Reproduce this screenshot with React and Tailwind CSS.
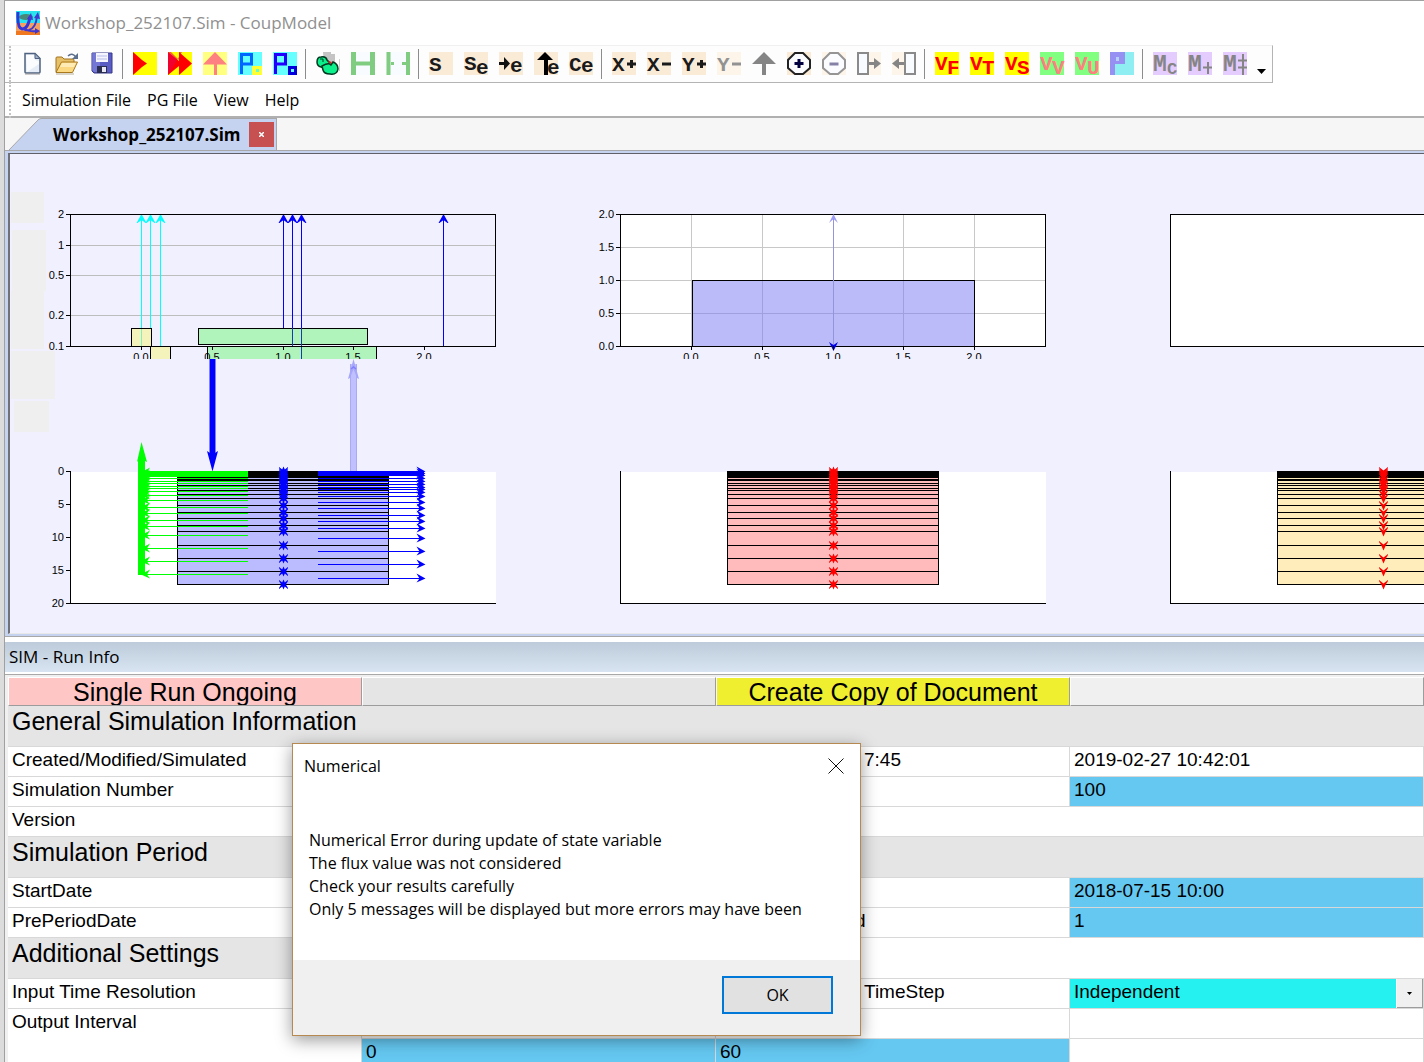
import React from 'react';

const UI_FONT = "font-['Open_Sans',sans-serif]";
const GRID_FONT = "font-['Liberation_Sans',Arial,sans-serif]";

/* ---------- toolbar icons (24 x 23 each) ---------- */

function Glyph({ x = 0, y = 18, size = 21, fill = '#1a1a1a', children }) {
  return (
    <text x={x} y={y} fontSize={size} fill={fill} fontWeight="bold" fontFamily="Liberation Mono, Courier New, monospace">
      {children}
    </text>
  );
}

function Tile({ fill }) {
  return <rect width="24" height="23" fill={fill} shapeRendering="crispEdges" />;
}

const PEACH = '#faebd7';
const PEACH_LIGHT = '#fdf4ea';

const fileTools = [
  {
    label: 'New',
    art: (
      <>
        <path d="M5 1.500h10l5 5V20q0 1-1 1H6q-1 0-1-1z" fill="#e6edf6" stroke="#4f6280" strokeWidth="1.500" />
        <path d="M6 3h8l1 5 4 1v3L7 20z" fill="#fff" opacity="0.8" />
        <path d="M15 1.500V6.500h5z" fill="#9fb0c8" stroke="#4f6280" />
        <path d="M5 22h15" stroke="#9a9a9a" />
      </>
    ),
  },
  {
    label: 'Open',
    art: (
      <>
        <path d="M1 20V6q0-1 1-1h5l2 2h9q1 0 1 1v4" fill="#e7c169" stroke="#a07320" />
        <path d="M1 20.500L6.500 10H22.500L17.500 20.500z" fill="#fbd983" stroke="#a8781f" />
        <path d="M7 11h14l-2 4H5z" fill="#ffecb4" />
        <path d="M13 4q4-4 8 1" fill="none" stroke="#5c6f8c" strokeWidth="1.500" />
        <path d="M23 1v6h-6z" fill="#5c6f8c" />
        <path d="M1 22h18" stroke="#8a7a55" opacity="0.6" />
      </>
    ),
  },
  {
    label: 'Save',
    art: (
      <>
        <path d="M2 1h20v20H4l-2-2z" fill="#5a5cc4" stroke="#36388c" />
        <path d="M2 1h8v19H4l-2-2z" fill="#8688e0" opacity="0.6" />
        <rect x="6" y="1" width="12" height="9" fill="#f4f5ff" />
        <path d="M7 4h10M7 7h10" stroke="#b9bce8" />
        <rect x="7" y="14" width="10" height="7" fill="#2c2e50" />
        <rect x="12" y="15" width="4" height="5" fill="#e8e8f4" />
      </>
    ),
  },
];

const runTools = [
  {
    label: 'Run',
    art: (
      <>
        <Tile fill="#ffff00" />
        <path d="M0 0L9 8l5 3.500L9 15 0 23z" fill="#ff0000" />
      </>
    ),
  },
  {
    label: 'Run all',
    art: (
      <>
        <Tile fill="#ffff00" />
        <path d="M0 0L11 9V0L24 11.500 11 23V14L0 23z" fill="#ff0000" />
        <path d="M0 0h3l8 8V0h3L0 23z" fill="#e8004c" opacity="0.600" />
      </>
    ),
  },
  {
    label: 'Upload result',
    art: (
      <>
        <Tile fill="#ffff80" />
        <path d="M12 0L24 12.500H14V23H11V12.500H0z" fill="#ff8080" />
      </>
    ),
  },
  {
    label: 'Parameters',
    art: (
      <>
        <Tile fill="#66ffff" />
        <path d="M3.500 22V2.500H13.500V12H3.500" fill="none" stroke="#0066ff" strokeWidth="3" />
        <rect x="14" y="14" width="10" height="9" fill="#ffff33" />
        <rect x="18" y="17" width="3" height="3" fill="#66ffcc" />
      </>
    ),
  },
  {
    label: 'Parameter list',
    art: (
      <>
        <Tile fill="#66ffff" />
        <path d="M2.500 22V2.500H12.500V12H2.500" fill="none" stroke="#2200ff" strokeWidth="3" />
        <rect x="16.500" y="15.500" width="6" height="6" fill="#66ffff" stroke="#0000dd" strokeWidth="3" />
      </>
    ),
  },
];

const linkTools = [
  {
    label: 'Duck',
    art: (
      <>
        <path d="M7 0h8v2h4v10H8z" fill="#c4c4c4" />
        <path d="M1 10Q1 5 5 5q5-1 6 3l3 3-3 2q-2 3-6 2-4-1-4-5z" fill="#0cf08c" stroke="#003820" strokeWidth="1.500" />
        <path d="M6 14q7-4 9-1l2-3q5 2 5 7-1 6-8 5-6 0-7-4z" fill="#0cf08c" stroke="#003820" strokeWidth="1.500" />
        <path d="M12 9l4 1-2 2z" fill="#e02020" />
        <path d="M4 7h3v3" fill="none" stroke="#003820" />
        <path d="M23.500 7v12" stroke="#d0d0d0" />
      </>
    ),
  },
  {
    label: 'Join columns',
    art: (
      <>
        <Tile fill="#f8fbff" />
        <path d="M2.500 0V23M21.500 0V23" stroke="#80cc80" strokeWidth="5" />
        <path d="M5 11.500H19" stroke="#80cc80" strokeWidth="4" />
      </>
    ),
  },
  {
    label: 'Split columns',
    art: (
      <>
        <Tile fill="#f8fbff" />
        <path d="M2.500 0V23M22 0V23" stroke="#80cc80" strokeWidth="4" />
        <path d="M5 11.500H8M16 11.500H20" stroke="#80cc80" strokeWidth="3" />
      </>
    ),
  },
];

const seriesTools = [
  { label: 'Series', art: <><Tile fill={PEACH} /><Glyph y={19}>S</Glyph></> },
  { label: 'Series e', art: <><Tile fill={PEACH} /><Glyph>S</Glyph><Glyph x={12} y={22}>e</Glyph></> },
  {
    label: 'Next e',
    art: <><Tile fill={PEACH} /><path d="M0 10h5V5l6 6.500-6 6.500V13H0z" fill="#111" /><Glyph x={11} y={20}>e</Glyph></>,
  },
  {
    label: 'Up e',
    art: <><Tile fill={PEACH} /><path d="M11 0l8 8h-5v15h-4V8H3z" fill="#000" /><Glyph x={13} y={22}>e</Glyph></>,
  },
  { label: 'Compare e', art: <><Tile fill={PEACH} /><Glyph y={19}>C</Glyph><Glyph x={12} y={20}>e</Glyph></> },
];

const axisTools = [
  { label: 'X plus', art: <><Tile fill={PEACH} /><Glyph y={19}>X</Glyph><path d="M15 12h9M19.500 8v8" stroke="#1a1a1a" strokeWidth="3" /></> },
  { label: 'X minus', art: <><Tile fill={PEACH} /><Glyph y={19}>X</Glyph><path d="M15 12h9" stroke="#1a1a1a" strokeWidth="3" /></> },
  { label: 'Y plus', art: <><Tile fill={PEACH} /><Glyph y={19}>Y</Glyph><path d="M15 12h9M19.500 8v8" stroke="#1a1a1a" strokeWidth="3" /></> },
  { label: 'Y minus', art: <><Tile fill={PEACH_LIGHT} /><Glyph y={19} fill="#929292">Y</Glyph><path d="M15 12h9" stroke="#929292" strokeWidth="3" /></> },
  { label: 'Up', art: <path d="M12 0L24 12H14V23H10V12H0z" fill="#858585" /> },
  {
    label: 'Zoom in',
    art: (
      <>
        <Tile fill={PEACH} />
        <path d="M8 1h8l7 7v8l-7 6H8l-7-6V8z" fill="#fafcff" stroke="#222" strokeWidth="2" />
        <path d="M7.500 11.500h9M12 7v9" stroke="#000040" strokeWidth="3" />
      </>
    ),
  },
  {
    label: 'Zoom out',
    art: (
      <>
        <Tile fill={PEACH_LIGHT} />
        <path d="M8 1h8l7 7v8l-7 6H8l-7-6V8z" fill="#fafcff" stroke="#959595" strokeWidth="2" />
        <path d="M7.500 12h9" stroke="#8580a5" strokeWidth="3" />
      </>
    ),
  },
  {
    label: 'Expand right',
    art: (
      <>
        <rect x="12" width="12" height="23" fill={PEACH_LIGHT} />
        <rect x="1" y="1" width="10" height="21" fill="#f8fbff" stroke="#8a8a8a" strokeWidth="2" />
        <path d="M12 10h5V6l7 5.500-7 5.500V13h-5z" fill="#858585" />
      </>
    ),
  },
  {
    label: 'Expand left',
    art: (
      <>
        <rect width="12" height="23" fill={PEACH_LIGHT} />
        <rect x="13" y="1" width="10" height="21" fill="#f8fbff" stroke="#8a8a8a" strokeWidth="2" />
        <path d="M12 10H7V6l-7 5.500L7 17V13h5z" fill="#858585" />
      </>
    ),
  },
];

const viewTools = [
  { label: 'View F', art: <><Tile fill="#ffff00" /><Glyph fill="#f00">V</Glyph><Glyph x={12} y={22} fill="#f00">F</Glyph></> },
  { label: 'View T', art: <><Tile fill="#ffff00" /><Glyph fill="#f00">V</Glyph><Glyph x={12} y={22} fill="#f00">T</Glyph></> },
  { label: 'View S', art: <><Tile fill="#ffff00" /><Glyph fill="#f00">V</Glyph><Glyph x={12} y={22} fill="#f00">S</Glyph></> },
  { label: 'View V', art: <><Tile fill="#80ff80" /><Glyph fill="#ff8080">V</Glyph><Glyph x={12} y={22} fill="#ff8080">V</Glyph></> },
  { label: 'View U', art: <><Tile fill="#80ff80" /><Glyph fill="#ff8080">V</Glyph><Glyph x={12} y={22} fill="#ff8080">U</Glyph></> },
  {
    label: 'View parameters',
    art: (
      <>
        <Tile fill="#8eeef2" />
        <path d="M0 0H15V12H5V23H0z" fill="#9590f2" />
        <rect x="6" y="5" width="3" height="4" fill="#b4d0f6" />
      </>
    ),
  },
];

const modelTools = [
  { label: 'Model C', art: <><Tile fill="#e5ccff" /><Glyph y={19} size={23} fill="#858585">M</Glyph><Glyph x={14} y={22} size={17} fill="#858585">C</Glyph></> },
  { label: 'Model add', art: <><Tile fill="#e5ccff" /><Glyph y={19} size={23} fill="#858585">M</Glyph><path d="M15 15.500h9M20 10v12" stroke="#858585" strokeWidth="2" /></> },
  { label: 'Model merge', art: <><Tile fill="#e5ccff" /><Glyph y={19} size={23} fill="#858585">M</Glyph><path d="M15 8.500h9M15 15.500h9M20 2v21" stroke="#858585" strokeWidth="2" /></> },
];

const toolGroups = [fileTools, runTools, linkTools, seriesTools, axisTools, viewTools, modelTools];

function AppLogo() {
  return (
    <svg width="24" height="24" viewBox="0 0 24 24" aria-hidden="true">
      <rect width="24" height="13" fill="#28e4ec" />
      <rect y="12" width="24" height="9" fill="#f4a060" />
      <rect y="20" width="24" height="4" fill="#f07820" />
      <ellipse cx="10" cy="6" rx="7" ry="3" fill="#488878" />
      <path d="M2 1Q1 17 6 18 12 18 14 6" fill="none" stroke="#3434dc" strokeWidth="3" />
      <path d="M7 17q2 3 6 2 7-2 8-14M9 18q4 3 11 2" fill="none" stroke="#4038d0" strokeWidth="2" />
      <path d="M11 8l4-6 2 7zM18 7l4-6 2 7zM19 17l5 3-5 3z" fill="#4038d0" />
    </svg>
  );
}

function Grip() {
  return <span className="h-9 border-l-2 border-dotted border-[#c4c4c4]" />;
}

function Toolbar() {
  return (
    <div className="flex h-[38px] w-fit items-center border-t border-r border-b border-t-[#f0f0f0] border-r-[#b4b4b4] border-b-[#b4b4b4] bg-[#fdfdfd] pr-[6px] pb-px pl-1">
      <Grip />
      <div className="ml-[9px] flex items-center">
        {toolGroups.map((group, i) => (
          <React.Fragment key={i}>
            {i > 0 && <span className="mr-[10px] ml-2 h-[30px] w-px bg-[#8c8c8c]" />}
            <div className="flex gap-[11px]">
              {group.map((tool) => (
                <button key={tool.label} type="button" aria-label={tool.label} className="h-[23px] w-6">
                  <svg width="24" height="23" viewBox="0 0 24 23" className="overflow-visible">{tool.art}</svg>
                </button>
              ))}
            </div>
          </React.Fragment>
        ))}
      </div>
      <button type="button" aria-label="Toolbar options" className="mt-4 ml-[10px]">
        <svg width="9" height="5" viewBox="0 0 9 5"><path d="M0 0h9L4.500 5z" fill="#000" /></svg>
      </button>
    </div>
  );
}

function MenuBar() {
  return (
    <nav className="flex h-[35px] items-center border-b-2 border-[#b0b0b0] bg-white pl-1">
      <Grip />
      <div className="ml-[11px] flex gap-4 text-[16px]">
        {['Simulation File', 'PG File', 'View', 'Help'].map((item) => (
          <button key={item} type="button">{item}</button>
        ))}
      </div>
    </nav>
  );
}

function DocumentTab() {
  return (
    <div className="flex h-[33px] items-end border-b border-[#a8a8a8] bg-[#f6f6f6] pl-1">
      <div className="flex h-8 items-stretch">
        <svg width="32" height="32" viewBox="0 0 32 32" aria-hidden="true">
          <path d="M0 32L28 3Q30 .5 32 .5V32z" fill="#c5d3f1" />
          <path d="M0 32L28 3Q30 .5 32 .5" fill="none" stroke="#a8a8a8" />
        </svg>
        <div className="flex items-center border-t border-r border-[#a8a8a8] bg-[#c5d3f1] pr-[2px] pl-3">
          <span className="text-[17px] font-bold">Workshop_252107.Sim</span>
          <button type="button" aria-label="Close document" className="ml-2 flex h-[25px] w-[25px] items-center justify-center bg-[#c75050] text-white">
            <svg width="5" height="5" viewBox="0 0 5 5"><path d="M0 0L5 5M5 0L0 5" stroke="#fff" strokeWidth="1.500" /></svg>
          </button>
        </div>
      </div>
    </div>
  );
}

/* ---------- plots ---------- */

const layers = [471, 473, 475, 477, 480, 483, 485, 488, 490, 494, 498, 505, 512, 518, 525, 531, 545, 558, 571, 584];
const uptake = [472, 474, 476, 478, 481, 483, 486, 488, 491, 495, 500, 507, 513, 520, 526, 535, 548, 561, 574];
const drainage = [471, 473, 475, 478, 481, 484, 487, 489, 492, 496, 502, 508, 515, 521, 528, 538, 551, 564, 578];

function PlotLabel({ x, y, anchor = 'end', children }) {
  return (
    <text x={x} y={y} fontSize="11" textAnchor={anchor} fill="#000" fontFamily="Liberation Sans, Arial, sans-serif">
      {children}
    </text>
  );
}

function YAxis({ ticks }) {
  return ticks.map(([y, label]) => (
    <g key={label}>
      <path d={`M66 ${y + 0.5}H70`} stroke="#000" shapeRendering="crispEdges" />
      <PlotLabel x={64} y={y + 4}>{label}</PlotLabel>
    </g>
  ));
}

function XAxis() {
  return [[141, '0.0'], [212, '0.5'], [283, '1.0'], [353, '1.5'], [424, '2.0']].map(([x, label]) => (
    <g key={label}>
      <path d={`M${x + 0.5} 346V350`} stroke="#000" shapeRendering="crispEdges" />
      <PlotLabel x={x} y={361} anchor="middle">{label}</PlotLabel>
    </g>
  ));
}

function UpArrow({ x, to, color }) {
  return (
    <g>
      <path d={`M${x + 0.5} 215V${to}`} stroke={color} shapeRendering="crispEdges" />
      <path d={`M${x + 0.5} 214l5 9h-1l-4-3-4 3h-1z`} fill={color} />
    </g>
  );
}

function Layers({ fill }) {
  return (
    <g shapeRendering="crispEdges">
      <rect x="177.5" y="471.5" width="211" height="113" fill={fill} stroke="#000" />
      <rect x="177" y="471" width="212" height="7" fill="#000" />
      <rect x="177" y="479" width="212" height="2" fill="#000" />
      {layers.slice(5).map((y) => (
        <path key={y} d={`M177 ${y + 0.5}H389`} stroke="#000" />
      ))}
    </g>
  );
}

function Markers({ color, both }) {
  return layers.map((y) => (
    <g key={y} fill={color}>
      <path d={`M279 ${y - 4}l4.500 3.500 4.500-3.500v1l-2.500 4-2 4.500-2-4.500-2.500-4z`} />
      {both && <path d={`M279 ${y + 5}l4.500-3.500 4.500 3.500v-1l-2.500-4-2-4.500-2 4.500-2.500 4z`} />}
    </g>
  ));
}

function LowerFrame() {
  return (
    <g shapeRendering="crispEdges">
      <rect x="71" y="472" width="425" height="131" fill="#fff" />
      <path d="M70.500 471V603.500H496" fill="none" stroke="#000" />
    </g>
  );
}

function PlotColumn({ children }) {
  return (
    <svg width="550" height="479" viewBox="10 154 550 479" className="shrink-0" aria-hidden="true">
      {children}
    </svg>
  );
}

function WaterPlots() {
  return (
    <PlotColumn>
      <g fill="#efeff0">
        <rect x="11" y="192" width="33" height="31" />
        <rect x="12" y="230" width="34" height="61" />
        <rect x="11" y="291" width="33" height="58" />
        <rect x="11" y="351" width="44" height="48" />
        <rect x="14" y="401" width="35" height="31" />
      </g>
      <svg x="0" y="154" width="560" height="205" viewBox="0 154 560 205">
        <g shapeRendering="crispEdges" fill="none">
          <path d="M71 245.500H495M71 275.500H495M71 315.500H495" stroke="#bdbdbd" />
        </g>
        <UpArrow x={141} to={346} color="#00ffff" />
        <UpArrow x={150} to={346} color="#00ffff" />
        <UpArrow x={160} to={346} color="#00ffff" />
        <UpArrow x={283} to={328} color="#0000ff" />
        <UpArrow x={443} to={346} color="#0000ff" />
        <g shapeRendering="crispEdges" stroke="#000">
          <rect x="131.500" y="328.500" width="20" height="18" fill="#f5f3bc" />
          <rect x="150.500" y="346.500" width="20" height="18" fill="#f5f3bc" />
          <rect x="198.500" y="328.500" width="169" height="16" fill="#b0f3bb" />
          <rect x="207.500" y="346.500" width="169" height="18" fill="#b0f3bb" />
          <path d="M141.500 329V346" stroke="#7ff0c0" />
          <path d="M292.500 328V346M301.500 328V359" stroke="#1040b0" />
          <rect x="70.500" y="214.500" width="425" height="132" fill="none" />
        </g>
        <UpArrow x={292} to={328} color="#0000ff" />
        <UpArrow x={301} to={328} color="#0000ff" />
        <YAxis ticks={[[214, '2'], [245, '1'], [275, '0.5'], [315, '0.2'], [346, '0.1']]} />
        <XAxis />
      </svg>

      <LowerFrame />
      <YAxis ticks={[[471, '0'], [504, '5'], [537, '10'], [570, '15'], [603, '20']]} />
      <Layers fill="#bbbbff" />

      {/* infiltration and evaporation */}
      <rect x="209" y="359" width="7" height="94" fill="#8080ff" />
      <path d="M210 359h5v94l3-2-5.500 20.500L207 451l3 2z" fill="#0000ff" />
      <rect x="350" y="364" width="7" height="107" fill="#aaaaf4" />
      <rect x="351" y="364" width="5" height="107" fill="#c0c0ff" />
      <path d="M353.500 359l5.500 20-2-1-3.500-9-3.500 9-2 1z" fill="#a6a6fa" />
      <path d="M351 369l2.500-2 2.500 2" fill="none" stroke="#8080ff" strokeWidth="1.500" />

      <path d="M138 575V461l-1 1 4.500-20 5.500 20-2-1v114z" fill="#00ff00" />
      <rect x="142" y="471" width="106" height="6" fill="#00ff00" />
      {uptake.map((y) => (
        <g key={y}>
          <path d={`M142 ${y + 0.5}H248`} stroke="#00ff00" shapeRendering="crispEdges" />
          <path d={`M141 ${y + 0.5}l9-5-3 5 3 4z`} fill="#00ff00" />
        </g>
      ))}

      <rect x="318" y="471" width="106" height="5" fill="#0000ff" />
      {drainage.map((y) => (
        <g key={y}>
          <path d={`M318 ${y + 0.5}H422`} stroke="#0000ff" shapeRendering="crispEdges" />
          <path d={`M425.500 ${y + 0.5}l-9-5 3 5-3 4z`} fill="#0000ff" />
        </g>
      ))}
      <Markers color="#0000ff" both />
    </PlotColumn>
  );
}

function HeatPlots() {
  return (
    <PlotColumn>
      <svg x="0" y="154" width="560" height="205" viewBox="0 154 560 205">
        <g shapeRendering="crispEdges">
          <rect x="70.500" y="214.500" width="425" height="132" fill="#fff" />
          <path
            d="M71 247.500H495M71 280.500H495M71 313.500H495M141.500 215V346M212.500 215V346M283.500 215V346M353.500 215V346M424.500 215V346"
            stroke="#c8c8c8"
          />
          <rect x="142.500" y="280.500" width="282" height="66" fill="#7777f5" fillOpacity="0.5" stroke="#000" />
          <path d="M283.500 215V346" stroke="#9494dc" />
          <rect x="70.500" y="214.500" width="425" height="132" fill="none" stroke="#000" />
        </g>
        <path d="M279 223l4.500-9 4.500 9-4.500-4z" fill="#9c9cf4" />
        <path d="M279 342l4.500 3 4.500-3-4.500 9z" fill="#0000e8" />
        <YAxis ticks={[[214, '2.0'], [247, '1.5'], [280, '1.0'], [313, '0.5'], [346, '0.0']]} />
        <XAxis />
      </svg>
      <LowerFrame />
      <Layers fill="#ffbbbb" />
      <Markers color="#ff0000" both />
    </PlotColumn>
  );
}

function NitrogenPlots() {
  return (
    <PlotColumn>
      <rect x="70.500" y="214.500" width="425" height="132" fill="#fff" stroke="#000" shapeRendering="crispEdges" />
      <LowerFrame />
      <Layers fill="#ffeebb" />
      <Markers color="#ff0000" />
    </PlotColumn>
  );
}

function PlotArea() {
  return (
    <main className="border-b border-[#a8a8a8] bg-[#c5d3f1] pt-[2px] pb-[2px] pl-[3px]">
      <div className="flex overflow-hidden border-t border-b border-l-2 border-t-[#606068] border-b-[#e8e8e8] border-l-[#707078] bg-[#f0f0ff]">
        <WaterPlots />
        <HeatPlots />
        <NitrogenPlots />
      </div>
    </main>
  );
}

/* ---------- run info grid ---------- */

function HeadCell({ children, className }) {
  return (
    <th className="p-0 font-normal">
      <button type="button" className={`block h-[29px] w-full overflow-hidden border-t border-r border-b border-l border-t-white border-r-[#9c9c9c] border-b-[#9c9c9c] border-l-white text-center text-[25px] leading-[28px] ${className}`}>
        {children}
      </button>
    </th>
  );
}

function Section({ children, partial }) {
  return (
    <tr className="h-[41px]">
      <th colSpan={partial ? 1 : 4} scope="rowgroup" className="border-b border-[#d8d8d8] bg-[#e5e5e5] p-0 pl-1 text-left align-top text-[25px] leading-[30px] font-normal whitespace-nowrap">
        {children}
      </th>
      {partial && <td colSpan={3} className="border-b border-[#d8d8d8]" />}
    </tr>
  );
}

function Label({ children, rowSpan }) {
  return (
    <th scope="row" rowSpan={rowSpan} className="border-r border-b border-[#d8d8d8] p-0 pl-1 text-left align-top leading-[26px] font-normal">
      {children}
    </th>
  );
}

function Cell({ children, className = '', colSpan }) {
  return (
    <td colSpan={colSpan} className={`border-r border-b border-[#d8d8d8] p-0 align-top leading-[26px] ${className}`}>
      {children}
    </td>
  );
}

function Editable({ label, value }) {
  return (
    <td className="border-r border-b border-[#d8d8d8] bg-[#65c8f1] p-0 align-top">
      <input aria-label={label} defaultValue={value} className="block h-[26px] w-full bg-transparent pl-1 leading-[26px] outline-none" />
    </td>
  );
}

function RunInfo() {
  return (
    <section>
      <h2 className="mt-[5px] flex h-[30px] items-center bg-linear-to-b from-[#bdcbda] to-[#d8e4f1] pl-1 text-[17px]">SIM - Run Info</h2>
      <div className="mt-[2px] border-t border-[#a8a8a8] bg-[#f0f0f0] pt-[2px] pl-[3px]">
        <table className={`w-full table-fixed border-separate border-spacing-0 bg-white text-[19px] ${GRID_FONT}`}>
          <thead>
            <tr>
              <HeadCell className="bg-[#ffc6c6]">Single Run Ongoing</HeadCell>
              <HeadCell className="bg-[#e5e5e5]" />
              <HeadCell className="bg-[#efef30]">Create Copy of Document</HeadCell>
              <HeadCell className="bg-[#f0f0f0]" />
            </tr>
          </thead>
          <tbody>
            <Section>General Simulation Information</Section>
            <tr className="h-[30px]">
              <Label>Created/Modified/Simulated</Label>
              <Cell />
              <Cell className="pl-[148px]">7:45</Cell>
              <Cell className="pl-1">2019-02-27 10:42:01</Cell>
            </tr>
            <tr className="h-[30px]">
              <Label>Simulation Number</Label>
              <Cell />
              <Cell />
              <Editable label="Simulation Number" value="100" />
            </tr>
            <tr className="h-[30px]">
              <Label>Version</Label>
              <Cell colSpan={3} />
            </tr>
            <Section>Simulation Period</Section>
            <tr className="h-[30px]">
              <Label>StartDate</Label>
              <Cell />
              <Cell />
              <Editable label="End date" value="2018-07-15 10:00" />
            </tr>
            <tr className="h-[30px]">
              <Label>PrePeriodDate</Label>
              <Cell />
              <Cell className="pl-[139px]">d</Cell>
              <Editable label="Period" value="1" />
            </tr>
            <Section partial>Additional Settings</Section>
            <tr className="h-[30px]">
              <Label>Input Time Resolution</Label>
              <Cell />
              <Cell className="pl-[148px]">TimeStep</Cell>
              <Cell>
                <div className="flex h-[29px] bg-white">
                  <select aria-label="TimeStep" className="mr-px min-w-0 flex-1 appearance-none bg-[#26f1f1] pb-[3px] pl-1 outline-none">
                    <option>Independent</option>
                  </select>
                  <span className="flex w-[26px] items-center justify-center border-r border-b border-[#9c9c9c] bg-[#f0f0f0]">
                    <svg width="5" height="3" viewBox="0 0 5 3"><path d="M0 0h5L2.500 3z" /></svg>
                  </span>
                </div>
              </Cell>
            </tr>
            <tr className="h-[30px]">
              <Label rowSpan={2}>Output Interval</Label>
              <Cell />
              <Cell />
              <Cell />
            </tr>
            <tr className="h-[30px]">
              <Editable label="Output interval, days" value="0" />
              <Editable label="Output interval, minutes" value="60" />
              <Cell />
            </tr>
          </tbody>
        </table>
      </div>
    </section>
  );
}

function ErrorDialog() {
  return (
    <div
      role="dialog"
      aria-labelledby="dialog-title"
      className="absolute top-[743px] left-[292px] w-[569px] border border-[#b5894f] bg-white text-[16px] shadow-[0_4px_16px_rgba(0,0,0,0.4)]"
    >
      <div className="flex h-11 items-center justify-between pr-4 pl-[11px]">
        <h3 id="dialog-title">Numerical</h3>
        <button type="button" aria-label="Close">
          <svg width="16" height="16" viewBox="0 0 16 16"><path d="M.5 .5l15 15M15.500 .5l-15 15" stroke="#111" /></svg>
        </button>
      </div>
      <div className="px-4 pt-[41px] pb-[39px] leading-[23px]">
        <p>Numerical Error during update of state variable</p>
        <p>The flux value was not considered</p>
        <p>Check your results carefully</p>
        <p>Only 5 messages will be displayed but more errors may have been</p>
      </div>
      <div className="flex h-[75px] justify-end bg-[#f0f0f0] pt-4 pr-[27px]">
        <button type="button" className="h-[38px] w-[111px] border-2 border-[#0078d7] bg-[#e1e1e1]">OK</button>
      </div>
    </div>
  );
}

export default function App() {
  return (
    <div className={`relative flex h-screen overflow-hidden bg-[#dcdcdc] text-black ${UI_FONT}`}>
      <div className="ml-1 flex min-w-0 flex-1 flex-col border-t border-l border-[#a0a0a0] bg-white">
        <header className="flex h-11 shrink-0 items-center gap-[5px] pl-[11px] text-[17px] text-[#909090]">
          <AppLogo />
          <h1>Workshop_252107.Sim - CoupModel</h1>
        </header>
        <Toolbar />
        <MenuBar />
        <DocumentTab />
        <PlotArea />
        <RunInfo />
      </div>
      <ErrorDialog />
    </div>
  );
}
